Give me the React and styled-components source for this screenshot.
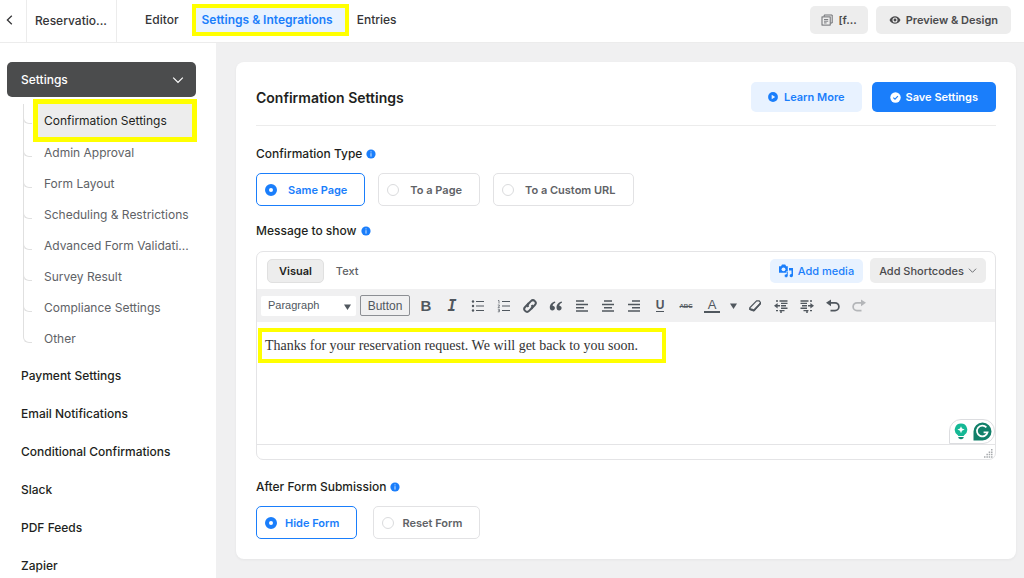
import { useState } from "react";
import styled, { createGlobalStyle, css } from "styled-components";

const subItems = [
  "Confirmation Settings",
  "Admin Approval",
  "Form Layout",
  "Scheduling & Restrictions",
  "Advanced Form Validati...",
  "Survey Result",
  "Compliance Settings",
  "Other",
];

const menuItems = [
  "Payment Settings",
  "Email Notifications",
  "Conditional Confirmations",
  "Slack",
  "PDF Feeds",
  "Zapier",
];

const InfoIcon = () => (
  <svg width="10" height="10" viewBox="0 0 10 10" aria-hidden="true">
    <circle cx="5" cy="5" r="4.6" fill="#1a7efb" />
    <rect x="4.5" y="4.2" width="1" height="3.4" fill="#cfe3fe" />
    <rect x="4.5" y="2.4" width="1" height="1" fill="#cfe3fe" />
  </svg>
);

const ChevronDown = ({ size = 12, color = "#fff" }) => (
  <svg width={size} height={size} viewBox="0 0 12 12" fill="none" aria-hidden="true">
    <path d="M1.2 3.6 6 8.4l4.8-4.8" stroke={color} strokeWidth="1.2" />
  </svg>
);

const Caret = () => (
  <svg width="7" height="6" viewBox="0 0 7 6" aria-hidden="true">
    <path d="M0 .5h7L3.5 6z" fill="#50575e" />
  </svg>
);

const ToolIcon = ({ children }) => (
  <svg width="16" height="16" viewBox="0 0 16 16" fill="none" stroke="currentColor" aria-hidden="true">
    {children}
  </svg>
);

const tools = [
  { label: "Bold", icon: "bold" },
  { label: "Italic", icon: "italic" },
  {
    label: "Bulleted list",
    icon: (
      <ToolIcon>
        <path d="M6 3.5h8M6 8h8M6 12.5h8" strokeWidth="1" />
        <g fill="currentColor" stroke="none">
          <circle cx="3" cy="3.5" r="1.2" />
          <circle cx="3" cy="8" r="1.2" />
          <circle cx="3" cy="12.5" r="1.2" />
        </g>
      </ToolIcon>
    ),
  },
  {
    label: "Numbered list",
    icon: (
      <ToolIcon>
        <path d="M6 3.5h8M6 8h8M6 12.5h8" strokeWidth="1" />
        <path d="M2 2.5h1v3M1.8 7h1.6v1L2 9.4h1.8M1.8 11.2h1.6v2.6H1.8M2.4 12.5h1" strokeWidth=".7" />
      </ToolIcon>
    ),
  },
  {
    label: "Insert link",
    icon: (
      <ToolIcon>
        <g strokeWidth="2" transform="rotate(-45 8 8)">
          <path d="M9 5.2H3.9a2.8 2.8 0 0 0 0 5.6h3.3a2.8 2.8 0 0 0 2.7-2.2" />
          <path d="M7 10.8h5.1a2.8 2.8 0 0 0 0-5.6H8.8a2.8 2.8 0 0 0-2.7 2.2" />
        </g>
      </ToolIcon>
    ),
  },
  {
    label: "Blockquote",
    icon: (
      <ToolIcon>
        <g fill="currentColor" stroke="none">
          <path d="M7 3.6C4.3 4 1.8 6.2 1.8 9.6c0 1.900 1.100 3 2.600 3 1.400 0 2.500-1 2.500-2.500 0-1.400-1-2.300-2.300-2.300C4.700 6.300 5.600 5.200 7.300 4.700z" />
          <path d="M13.7 3.6C11 4 8.500 6.200 8.500 9.600c0 1.900 1.100 3 2.600 3 1.400 0 2.500-1 2.500-2.500 0-1.400-1-2.300-2.300-2.300.1-1.500 1-2.600 2.700-3.100z" />
        </g>
      </ToolIcon>
    ),
  },
  {
    label: "Align left",
    icon: (
      <ToolIcon>
        <path d="M2 3h8M2 6.4h12M2 9.7h8M2 13h12" strokeWidth="1.5" />
      </ToolIcon>
    ),
  },
  {
    label: "Align center",
    icon: (
      <ToolIcon>
        <path d="M4 3h8M2 6.4h12M4 9.7h8M2 13h12" strokeWidth="1.5" />
      </ToolIcon>
    ),
  },
  {
    label: "Align right",
    icon: (
      <ToolIcon>
        <path d="M6 3h8M2 6.4h12M6 9.7h8M2 13h12" strokeWidth="1.5" />
      </ToolIcon>
    ),
  },
  { label: "Underline", icon: "underline" },
  { label: "Strikethrough", icon: "strike" },
  { label: "Text color", icon: "color" },
  { label: "More colors", icon: "caret" },
  {
    label: "Clear formatting",
    icon: (
      <ToolIcon>
        <path d="M9.6 2.8h2.6l1.2 1.6v1.4L7.2 12.6 2.8 11.2V9.8z" fill="#f0f0f1" strokeWidth="1.2" />
        <path d="M2.8 10.4 6.8 11.600 13.400 4.600v1.400L7 13.200 2.800 11.800z" fill="currentColor" strokeWidth=".7" />
      </ToolIcon>
    ),
  },
  {
    label: "Decrease indent",
    icon: (
      <ToolIcon>
        <path d="M3 3h2M6.5 3h8M8 5.4h6.5M8 7.8h5M8 10.2h6.5M3 12.6h2M6.5 12.6h5" strokeWidth="1.4" />
        <path d="M4 7.8h3M8 13v2" strokeWidth="1.5" />
        <path d="M1 7.8 4.6 5v5.6z" fill="currentColor" stroke="none" />
      </ToolIcon>
    ),
  },
  {
    label: "Increase indent",
    icon: (
      <ToolIcon>
        <path d="M13 3h-2M9.5 3h-8M8 5.4H1.5M8 7.8H3M8 10.2H1.5M13 12.6h-2M9.5 12.6h-5" strokeWidth="1.4" />
        <path d="M9 7.8h3M8 13v2" strokeWidth="1.5" />
        <path d="M15 7.8 11.4 5v5.6z" fill="currentColor" stroke="none" />
      </ToolIcon>
    ),
  },
  {
    label: "Undo",
    icon: (
      <ToolIcon>
        <path d="M4 4.8h6a3.9 3.9 0 0 1 0 7.8H5.5" strokeWidth="1.7" />
        <path d="M1 4.8 6 1.4v6.8z" fill="currentColor" stroke="none" />
      </ToolIcon>
    ),
  },
  {
    label: "Redo",
    disabled: true,
    icon: (
      <ToolIcon>
        <path d="M12 4.8H6a3.9 3.9 0 0 0 0 7.8h4.5" strokeWidth="1.7" />
        <path d="M15 4.8 10 1.4v6.8z" fill="currentColor" stroke="none" />
      </ToolIcon>
    ),
  },
];

const renderTool = (icon) => {
  switch (icon) {
    case "bold":
      return <BoldGlyph>B</BoldGlyph>;
    case "italic":
      return <ItalicGlyph>I</ItalicGlyph>;
    case "underline":
      return <UnderlineGlyph>U</UnderlineGlyph>;
    case "strike":
      return <StrikeGlyph>ABC</StrikeGlyph>;
    case "color":
      return <ColorGlyph>A</ColorGlyph>;
    case "caret":
      return <Caret />;
    default:
      return icon;
  }
};

const RadioGroup = ({ name, label, options, value, onChange, wide }) => (
  <Fieldset>
    <FieldTitle as="legend">
      {label} <InfoIcon />
    </FieldTitle>
    <RadioRow $wide={wide}>
      {options.map((option) => (
        <RadioCard key={option} $checked={option === value} $tight={wide}>
          <RadioInput
            type="radio"
            name={name}
            checked={option === value}
            onChange={() => onChange(option)}
          />
          {option}
        </RadioCard>
      ))}
    </RadioRow>
  </Fieldset>
);

const App = () => {
  const [type, setType] = useState("Same Page");
  const [after, setAfter] = useState("Hide Form");
  const [message, setMessage] = useState(
    "Thanks for your reservation request. We will get back to you soon."
  );

  return (
    <>
      <GlobalStyle />
      <Header>
        <BackButton aria-label="Back">
          <svg width="7" height="10" viewBox="0 0 7 10" fill="none" aria-hidden="true">
            <path d="M5.8.8 1.4 5l4.4 4.2" stroke="#353537" strokeWidth="1.3" />
          </svg>
        </BackButton>
        <FormName>Reservatio...</FormName>
        <Tabs>
          <Tab href="#editor">Editor</Tab>
          <Tab href="#settings" $active>
            Settings &amp; Integrations
          </Tab>
          <Tab href="#entries">Entries</Tab>
        </Tabs>
        <HeaderActions>
          <GrayButton $compact>
            <svg width="12" height="12" viewBox="0 0 12 12" fill="none" stroke="#606266" aria-hidden="true">
              <path d="M3.2 2.5V1h8v8H9.6" strokeWidth=".9" />
              <rect x="1" y="2.9" width="8.2" height="8.2" strokeWidth=".9" />
              <path d="M3 5.5h4.2M3 7.2h4.2M3 8.9h2.6" strokeWidth=".8" />
            </svg>
            [f...
          </GrayButton>
          <GrayButton>
            <svg width="12" height="12" viewBox="0 0 12 12" aria-hidden="true">
              <path d="M.5 6C1.7 3.5 3.7 2.2 6 2.2S10.3 3.5 11.5 6C10.3 8.5 8.3 9.8 6 9.8S1.7 8.5.5 6z" fill="#4a4a4c" />
              <circle cx="6" cy="6" r="2" fill="none" stroke="#ededed" strokeWidth="1.1" />
            </svg>
            Preview &amp; Design
          </GrayButton>
        </HeaderActions>
      </Header>

      <Layout>
        <Sidebar>
          <SidebarToggle aria-expanded="true">
            Settings
            <ChevronDown />
          </SidebarToggle>
          <SubMenu>
            {subItems.map((item, index) => (
              <SubMenuItem key={item}>
                <SubMenuLink href="#settings" $active={index === 0}>
                  {item}
                </SubMenuLink>
              </SubMenuItem>
            ))}
          </SubMenu>
          {menuItems.map((item) => (
            <MenuLink key={item} href="#menu">
              {item}
            </MenuLink>
          ))}
        </Sidebar>

        <Main>
          <Card>
            <CardHeader>
              <CardTitle>Confirmation Settings</CardTitle>
              <CardActions>
                <SoftButton $large>
                  <svg width="10" height="10" viewBox="0 0 10 10" aria-hidden="true">
                    <circle cx="5" cy="5" r="4.9" fill="#1a7efb" />
                    <path d="M3.7 2.8 7.2 5 3.7 7.2z" fill="#e8f2ff" />
                  </svg>
                  Learn More
                </SoftButton>
                <PrimaryButton>
                  <svg width="11" height="11" viewBox="0 0 11 11" aria-hidden="true">
                    <circle cx="5.5" cy="5.5" r="5.2" fill="#fff" />
                    <path d="M3.3 5.6 5 7.2l2.9-3" fill="none" stroke="#1a7efb" strokeWidth="1.1" />
                  </svg>
                  Save Settings
                </PrimaryButton>
              </CardActions>
            </CardHeader>

            <RadioGroup
              name="type"
              label="Confirmation Type"
              options={["Same Page", "To a Page", "To a Custom URL"]}
              value={type}
              onChange={setType}
            />

            <MessageLabel htmlFor="message">
              Message to show <InfoIcon />
            </MessageLabel>
            <Editor>
              <EditorTop>
                <ModeButton $active>Visual</ModeButton>
                <ModeButton>Text</ModeButton>
                <EditorActions>
                  <SoftButton>
                    <svg width="14" height="14" viewBox="0 0 14 14" aria-hidden="true">
                      <path d="M0 2.2h2L3 .5h3.2l1 1.7h1.6v6.6H0z" fill="#1a7efb" />
                      <circle cx="4.5" cy="5.3" r="1.9" fill="#e8f2ff" />
                      <path d="M10 4h4v7.6a1.7 1.7 0 1 1-1.5-1.7V6.6H10z" fill="#1a7efb" />
                      <path d="M7.5 7.5H9v4.3A1.8 1.8 0 1 1 7.5 10z" fill="#1a7efb" stroke="#e8f2ff" strokeWidth=".5" />
                    </svg>
                    Add media
                  </SoftButton>
                  <ShortcodeButton>
                    Add Shortcodes
                    <ChevronDown size={9} color="#606266" />
                  </ShortcodeButton>
                </EditorActions>
              </EditorTop>
              <Toolbar>
                <SelectWrap>
                  <FormatSelect aria-label="Format" defaultValue="p">
                    <option value="p">Paragraph</option>
                    <option value="h1">Heading 1</option>
                  </FormatSelect>
                  <Caret />
                </SelectWrap>
                <InsertButton>Button</InsertButton>
                {tools.map((tool) => (
                  <ToolButton
                    key={tool.label}
                    aria-label={tool.label}
                    disabled={tool.disabled}
                    $narrow={tool.icon === "caret"}
                  >
                    {renderTool(tool.icon)}
                  </ToolButton>
                ))}
              </Toolbar>
              <MessageArea>
                <MessageInput
                  id="message"
                  spellCheck={false}
                  value={message}
                  onChange={(e) => setMessage(e.target.value)}
                />
                <Marker />
                <Assistant>
                  <svg width="14" height="18" viewBox="0 0 14 18" aria-hidden="true">
                    <path d="M7 .5a6.2 6.2 0 0 0-3.400 11.400c.4.3.6.6.7 1.100h5.400c.1-.5.3-.8.7-1.100A6.200 6.200 0 0 0 7 .5z" fill="#15b895" />
                    <path d="M7 3.2 8 5.6l2.600 1L8 7.700l-1 2.500-1-2.500-2.600-1.100L6 5.600z" fill="#fff" />
                    <path d="M4.3 14h5.400c0 1.400-.9 2.200-2.700 2.200S4.300 15.400 4.300 14z" fill="#0e8a72" />
                  </svg>
                  <svg width="19" height="19" viewBox="0 0 19 19" aria-hidden="true">
                    <path d="M9.5.5a9 9 0 1 1 0 18H.5v-9a9 9 0 0 1 9-9z" fill="#11806a" />
                    <path d="M13.4 5.4A5.4 5.4 0 1 0 14.6 10.3h-4" fill="none" stroke="#fff" strokeWidth="1.7" />
                  </svg>
                </Assistant>
              </MessageArea>
              <StatusBar>
                <svg width="9" height="9" viewBox="0 0 9 9" fill="#a7aaad" aria-hidden="true">
                  <path d="M7 0h1.500v1.500H7zM7 2.400h1.500v1.500H7zM7 4.800h1.500v1.500H7zM7 7.200h1.500v1.500H7zM4.700 2.400h1.500v1.500H4.700zM4.700 4.800h1.500v1.500H4.700zM4.700 7.200h1.500v1.500H4.700zM2.400 4.800h1.500v1.500H2.400zM2.400 7.200h1.500v1.500H2.400zM0 7.200h1.500v1.500H0z" />
                </svg>
              </StatusBar>
            </Editor>

            <RadioGroup
              name="after"
              label="After Form Submission"
              options={["Hide Form", "Reset Form"]}
              value={after}
              onChange={setAfter}
              wide
            />
          </Card>
        </Main>
      </Layout>
    </>
  );
};

export default App;

const GlobalStyle = createGlobalStyle`
  * {
    box-sizing: border-box;
  }
  body {
    margin: 0;
    height: 100vh;
    overflow: hidden;
    background-color: #f0f0f1;
    color: #1e1f21;
    font-family: Inter, "Liberation Sans", sans-serif;
    font-size: 12px;
  }
  button,
  select,
  textarea {
    font: inherit;
    color: inherit;
  }
  button {
    display: inline-flex;
    align-items: center;
    justify-content: center;
    padding: 0;
    border: none;
    background: none;
    white-space: nowrap;
  }
  a {
    color: inherit;
    text-decoration: none;
  }
  svg {
    flex-shrink: 0;
  }
`;

const Header = styled.header`
  display: flex;
  align-items: center;
  height: 43px;
  background-color: white;
  border-bottom: 1px solid #ececec;
`;

const BackButton = styled.button`
  width: 26px;
  height: 100%;
  padding: 0 8px 2px 0;
`;

const FormName = styled.div`
  display: flex;
  align-items: center;
  width: 91px;
  height: 100%;
  padding: 0 0 2px 8px;
  border: solid #ececec;
  border-width: 0 1px;
  color: #353537;
  font-weight: 500;
`;

const Tabs = styled.nav`
  display: flex;
  align-items: center;
  gap: 17px;
  padding: 0 0 2px 28px;
`;

const Tab = styled.a`
  line-height: 24px;
  color: #353537;
  font-weight: 500;
  ${({ $active }) =>
    $active &&
    css`
      margin-right: -5px;
      padding: 0 12px 0 6px;
      background-color: #e8f2ff;
      color: #1a7efb;
      font-weight: 600;
      outline: 4px solid #ffff00;
    `}
`;

const HeaderActions = styled.div`
  display: flex;
  gap: 8px;
  margin-left: auto;
  padding: 0 13px 2px 0;
`;

const GrayButton = styled.button`
  gap: 5px;
  height: 28px;
  padding: 0 ${({ $compact }) => ($compact ? "11px" : "13px")};
  border-radius: 5px;
  background-color: #ededed;
  color: #4a4a4c;
  font-size: 11px;
  font-weight: 600;
`;

const Layout = styled.div`
  display: flex;
  align-items: stretch;
`;

const Sidebar = styled.aside`
  flex: 0 0 216px;
  min-height: calc(100vh - 43px);
  padding: 19px 20px 0 7px;
  background-color: white;
`;

const SidebarToggle = styled.button`
  && {
    display: flex;
    justify-content: space-between;
  }
  width: 100%;
  height: 35px;
  padding: 0 12px 0 14px;
  border-radius: 5px;
  background-color: #4b4c4d;
  color: white;
  font-weight: 500;
`;

const SubMenu = styled.ul`
  margin: 7px 4px 3px 16px;
  padding: 0;
  list-style: none;
`;

const SubMenuItem = styled.li`
  position: relative;
  padding-left: 15px;
  &::before {
    content: "";
    position: absolute;
    left: 0;
    top: 0;
    height: 19px;
    width: 8px;
    border: solid #e0e0e0;
    border-width: 0 0 1px 1px;
    border-bottom-left-radius: 6px;
  }
  &:not(:last-child)::after {
    content: "";
    position: absolute;
    left: 0;
    top: 0;
    bottom: 0;
    border-left: 1px solid #e0e0e0;
  }
`;

const SubMenuLink = styled.a`
  display: block;
  padding-left: 6px;
  line-height: 31px;
  color: #606266;
  white-space: nowrap;
  ${({ $active }) =>
    $active &&
    css`
      background-color: #ededed;
      color: #1e1f21;
      line-height: 33px;
      outline: 5px solid #ffff00;
    `}
`;

const MenuLink = styled.a`
  display: block;
  padding-left: 14px;
  line-height: 38px;
  font-weight: 500;
`;

const Main = styled.main`
  flex: 1;
  min-width: 0;
  padding: 19px 8px 19px 20px;
`;

const Card = styled.section`
  padding: 20px;
  border-radius: 8px;
  background-color: white;
  box-shadow: 0 1px 3px rgba(30, 31, 33, 0.05);
`;

const CardHeader = styled.div`
  display: flex;
  align-items: center;
  justify-content: space-between;
  padding-bottom: 13px;
  margin-bottom: 20px;
  border-bottom: 1px solid #ececec;
`;

const CardTitle = styled.h1`
  margin: 0;
  font-size: 14px;
  font-weight: 600;
`;

const CardActions = styled.div`
  display: flex;
  gap: 10px;
`;

const SoftButton = styled.button`
  gap: ${({ $large }) => ($large ? "6px" : "5px")};
  height: ${({ $large }) => ($large ? "30px" : "24px")};
  padding: 0 ${({ $large }) => ($large ? "17px" : "9px")};
  border-radius: 5px;
  background-color: #e8f2ff;
  color: #1a7efb;
  font-size: 11px;
  font-weight: ${({ $large }) => ($large ? 600 : 500)};
`;

const PrimaryButton = styled.button`
  gap: 5px;
  height: 30px;
  padding: 0 18px;
  border-radius: 5px;
  background-color: #1a7efb;
  color: white;
  font-size: 11px;
  font-weight: 600;
`;

const Fieldset = styled.fieldset`
  min-width: 0;
  margin: 0;
  padding: 0;
  border: none;
`;

const FieldTitle = styled.span`
  display: flex;
  align-items: center;
  gap: 4px;
  padding: 0;
  line-height: 16px;
  font-weight: 500;
`;

const MessageLabel = styled.label`
  display: flex;
  align-items: center;
  gap: 4px;
  margin: 17px 0 12px;
  line-height: 16px;
  font-weight: 500;
`;

const RadioRow = styled.div`
  display: flex;
  gap: ${({ $wide }) => ($wide ? "16px" : "13px")};
  margin-top: 11px;
`;

const RadioCard = styled.label`
  display: flex;
  align-items: center;
  gap: ${({ $tight }) => ($tight ? "8px" : "11px")};
  height: 33px;
  padding: 0 17px 0 8px;
  border: 1px solid ${({ $checked }) => ($checked ? "#1a7efb" : "#e2e2e4")};
  border-radius: 5px;
  color: ${({ $checked }) => ($checked ? "#1a7efb" : "#606266")};
  font-size: 11px;
  font-weight: 600;
`;

const RadioInput = styled.input`
  appearance: none;
  width: 12px;
  height: 12px;
  margin: 0;
  border: 1px solid #dadbdd;
  border-radius: 50%;
  background-color: white;
  &:checked {
    border: 4px solid #1a7efb;
  }
`;

const Editor = styled.div`
  margin-bottom: 19px;
  border: 1px solid #e4e4e6;
  border-radius: 7px;
`;

const EditorTop = styled.div`
  display: flex;
  align-items: center;
  height: 37px;
  padding: 0 9px 0 10px;
`;

const ModeButton = styled.button`
  height: 24px;
  padding: 0 11px;
  border: 1px solid ${({ $active }) => ($active ? "#e0e0e0" : "transparent")};
  border-radius: 5px;
  background-color: ${({ $active }) => ($active ? "#ededed" : "transparent")};
  color: ${({ $active }) => ($active ? "#1e1f21" : "#606266")};
  font-size: 11px;
  font-weight: ${({ $active }) => ($active ? 600 : 500)};
`;

const EditorActions = styled.div`
  display: flex;
  align-items: center;
  gap: 7px;
  margin-left: auto;
`;

const ShortcodeButton = styled.button`
  gap: 4px;
  height: 25px;
  padding: 0 9px;
  border-radius: 5px;
  background-color: #ededed;
  color: #4a4a4c;
  font-size: 11px;
  font-weight: 500;
`;

const Toolbar = styled.div`
  display: flex;
  align-items: center;
  height: 33px;
  padding-left: 4px;
  background-color: #f0f0f1;
  color: #50575e;
  font-family: "Liberation Sans", Arial, sans-serif;
`;

const SelectWrap = styled.div`
  position: relative;
  width: 95px;
  margin-right: 4px;
  svg {
    position: absolute;
    right: 5px;
    top: 8px;
    pointer-events: none;
  }
`;

const FormatSelect = styled.select`
  display: block;
  appearance: none;
  width: 100%;
  height: 20px;
  padding: 0 7px 2px;
  border: none;
  border-radius: 2px;
  background-color: white;
  font-size: 11px;
`;

const InsertButton = styled.button`
  width: 50px;
  height: 21px;
  margin-right: 3px;
  border: 1px solid #8c8f94;
  border-radius: 2px;
`;

const ToolButton = styled.button`
  width: ${({ $narrow }) => ($narrow ? "17px" : "26px")};
  height: 26px;
  color: ${({ disabled }) => (disabled ? "#b4b6b9" : "#50575e")};
`;

const BoldGlyph = styled.span`
  font-size: 15px;
  font-weight: 700;
`;

const ItalicGlyph = styled.span`
  font-family: "DejaVu Sans Mono", monospace;
  font-size: 15px;
  font-style: italic;
  font-weight: 700;
`;

const UnderlineGlyph = styled.span`
  border-bottom: 1px solid currentColor;
  line-height: 12px;
  font-size: 12px;
  font-weight: 700;
`;

const StrikeGlyph = styled.span`
  font-size: 6px;
  font-weight: 700;
  text-decoration: line-through;
`;

const ColorGlyph = styled.span`
  padding: 0 4px;
  border-bottom: 2px solid currentColor;
  line-height: 13px;
  font-size: 13px;
`;

const MessageArea = styled.div`
  position: relative;
  height: 122px;
`;

const MessageInput = styled.textarea`
  display: block;
  width: 100%;
  height: 100%;
  padding: 13px 8px;
  border: none;
  outline: none;
  background: transparent;
  resize: none;
  color: #333;
  line-height: 22px;
  font-family: "Liberation Serif", Georgia, serif;
  font-size: 14px;
`;

/* yellow frame around the message text */
const Marker = styled.div`
  position: absolute;
  top: 6px;
  left: 1px;
  width: 408px;
  height: 35px;
  border: 4px solid #ffff00;
  pointer-events: none;
`;

const Assistant = styled.div`
  position: absolute;
  right: 0;
  bottom: 0;
  display: flex;
  align-items: center;
  gap: 5px;
  height: 25px;
  padding: 0 2px 0 4px;
  border: 1px solid #dcdde0;
  border-radius: 12px 12px 12px 0;
  background-color: white;
`;

const StatusBar = styled.div`
  display: flex;
  align-items: flex-end;
  justify-content: flex-end;
  height: 15px;
  padding: 0 2px 1px 0;
  border-top: 1px solid #e4e4e6;
`;
